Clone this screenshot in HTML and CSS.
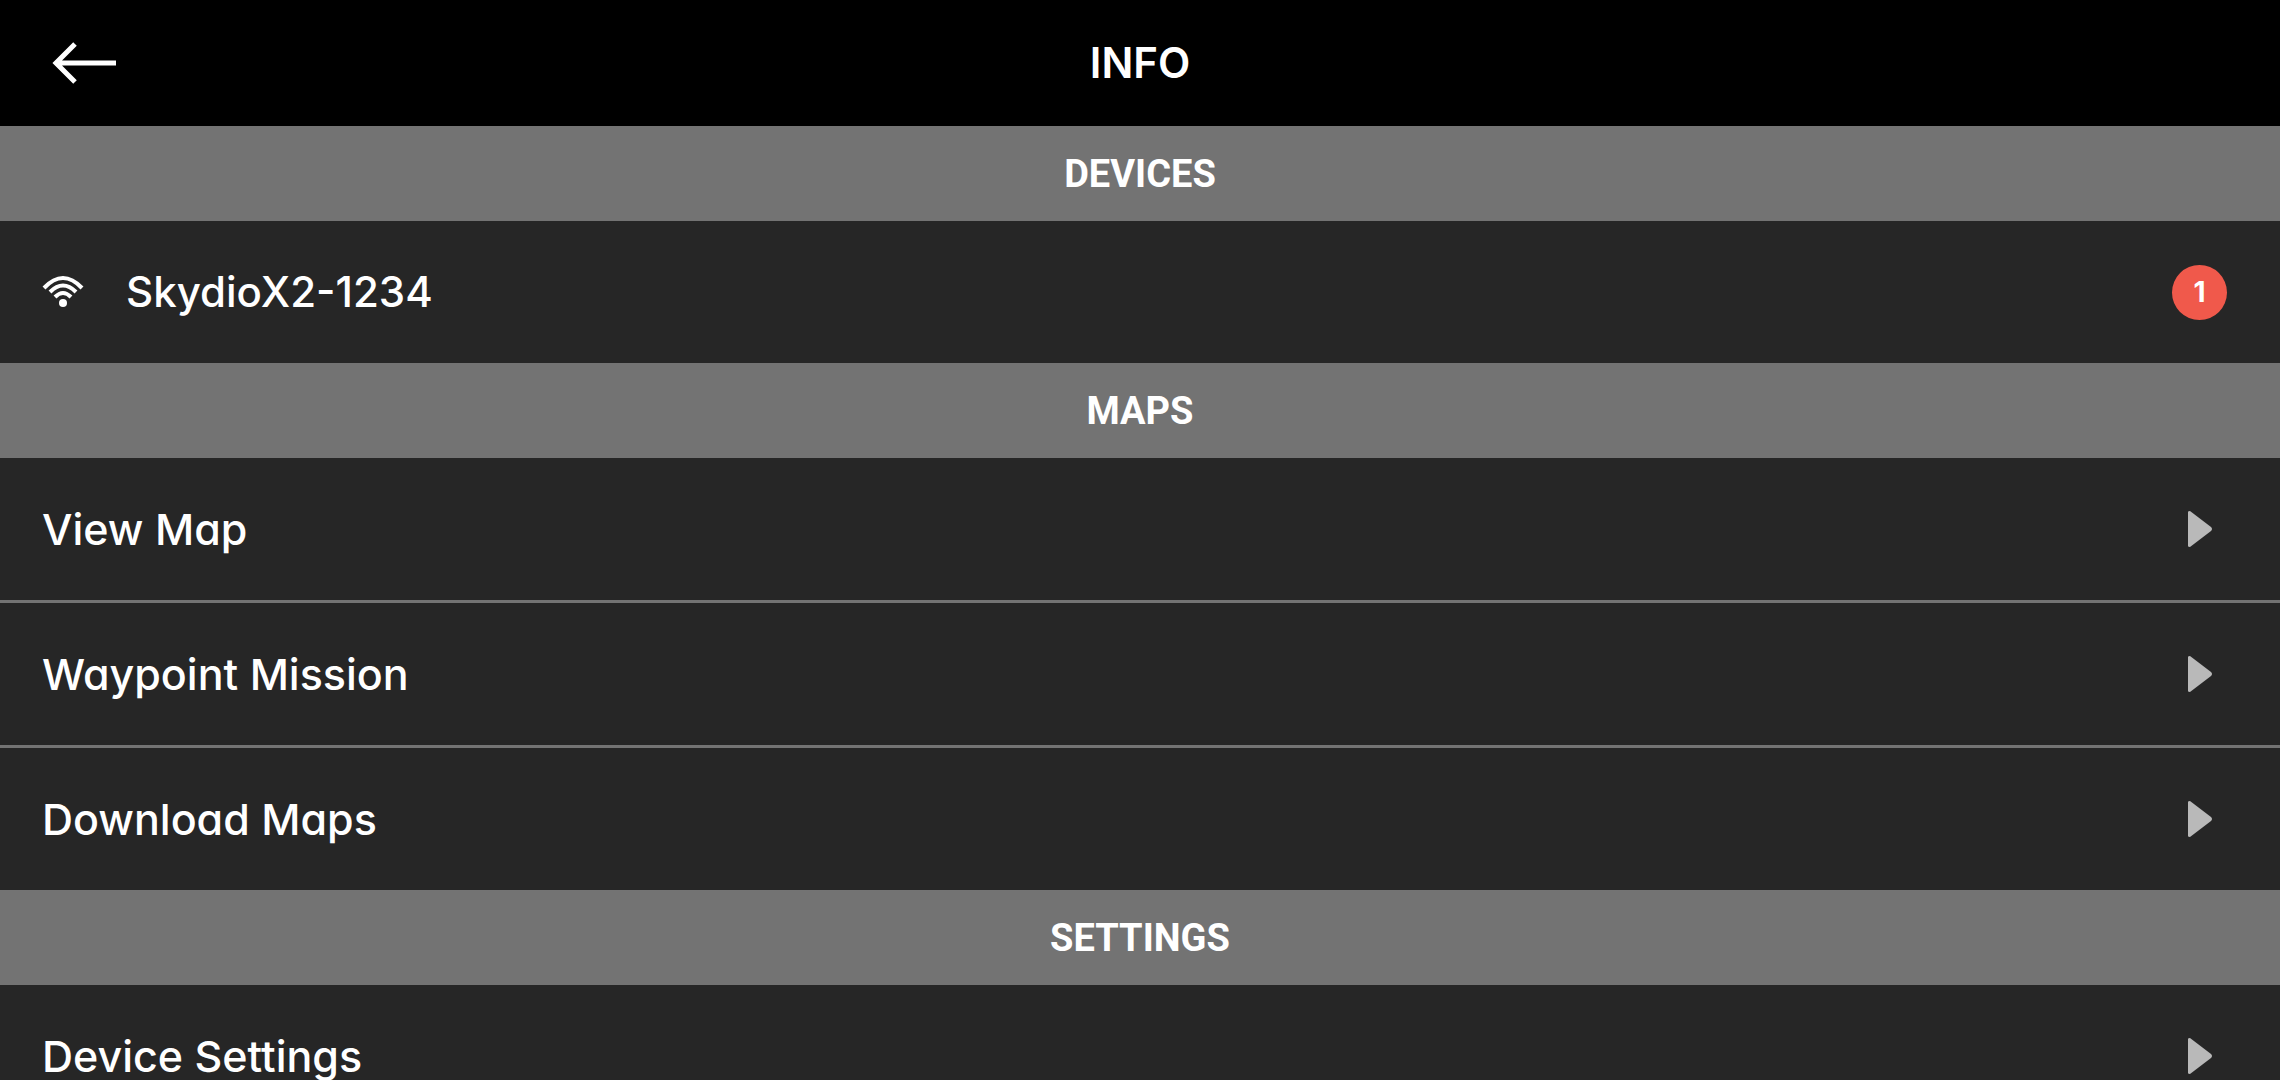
FILE: index.html
```html
<!DOCTYPE html>
<html lang="en">

<head>
  <meta charset="UTF-8">
  <meta name="viewport" content="width=device-width, initial-scale=1.0">
  <title>Info</title>

  <link rel="stylesheet" href="styles.css">
</head>

<body>

  <header class="topbar">
    <button class="back" type="button" aria-label="Back">
      <svg width="64" height="44" viewBox="0 0 64 44" fill="none" stroke="currentColor" stroke-width="5">
        <path d="M23 3 L4 22 L23 41 M4 22 H64" />
      </svg>
    </button>
    <h1>INFO</h1>
  </header>

  <main class="list">

    <section>
      <h2>DEVICES</h2>
      <a class="row" href="#device">
        <svg class="wifi" width="42" height="34" viewBox="0 0 42 34" fill="none" stroke="currentColor" stroke-width="4">
          <path d="M2 13 Q21 -7 40 13" />
          <path d="M8 17 Q21 4 34 17" />
          <path d="M13 22 Q21 14 29 22" />
          <circle cx="21" cy="28" r="4" fill="currentColor" stroke="none" />
        </svg>
        <span class="label device">SkydioX2-1234</span>
        <span class="end"><span class="badge">1</span></span>
      </a>
    </section>

    <section>
      <h2>MAPS</h2>
      <a class="row" href="#view-map">
        <span class="label">View Map</span>
        <span class="end"><svg class="caret" width="24" height="36" viewBox="0 0 24 36"><path d="M0 1 Q0 0 2 0 L23 16 Q25 18 23 20 L2 36 Q0 36 0 35 Z" /></svg></span>
      </a>
      <a class="row" href="#waypoint-mission">
        <span class="label">Waypoint Mission</span>
        <span class="end"><svg class="caret" width="24" height="36" viewBox="0 0 24 36"><path d="M0 1 Q0 0 2 0 L23 16 Q25 18 23 20 L2 36 Q0 36 0 35 Z" /></svg></span>
      </a>
      <a class="row" href="#download-maps">
        <span class="label">Download Maps</span>
        <span class="end"><svg class="caret" width="24" height="36" viewBox="0 0 24 36"><path d="M0 1 Q0 0 2 0 L23 16 Q25 18 23 20 L2 36 Q0 36 0 35 Z" /></svg></span>
      </a>
    </section>

    <section>
      <h2>SETTINGS</h2>
      <a class="row" href="#device-settings">
        <span class="label">Device Settings</span>
        <span class="end"><svg class="caret" width="24" height="36" viewBox="0 0 24 36"><path d="M0 1 Q0 0 2 0 L23 16 Q25 18 23 20 L2 36 Q0 36 0 35 Z" /></svg></span>
      </a>
    </section>

  </main>

</body>

</html>
```
FILE: styles.css
```css
* {
  box-sizing: border-box;
}

body {
  display: flex;
  flex-direction: column;
  height: 100vh;
  margin: 0;
  background: #262626;
  color: #fff;
  font-family: Inter, "Liberation Sans", sans-serif;
  font-feature-settings: "cv11"; /* single-storey a */
  font-size: 43px;
  font-weight: 500;
  line-height: 54px;
}

svg {
  display: block;
}

/* top bar: the two side columns keep the title centred */
.topbar {
  display: grid;
  grid-template-columns: 1fr auto 1fr;
  align-items: center;
  flex: none;
  padding: 36px 52px;
  background: #000;
}

.topbar h1 {
  margin: 0;
  font-size: 42px;
  font-weight: 600;
}

.back {
  justify-self: start;
  padding: 0;
  border: 0;
  background: transparent;
  color: inherit;
}

/* scrolling list under the bar */
.list {
  flex: 1;
  min-height: 0;
  overflow-y: auto;
  scrollbar-width: none;
}

.list h2 {
  margin: 0;
  padding: 24px 0 23px;
  background: #737373;
  font-family: Roboto, sans-serif;
  font-size: 38px;
  font-weight: 700;
  line-height: 48px;
  text-align: center;
}

.row {
  display: flex;
  align-items: center;
  gap: 42px;
  padding: 43px 53px 43px 42px;
  color: inherit;
  line-height: 56px;
  text-decoration: none;
}

.row + .row {
  border-top: 3px solid #737373;
}

.label {
  flex: 1;
}

.device {
  font-size: 42px;
}

.end {
  display: flex;
  justify-content: center;
  width: 55px;
}

.badge {
  width: 55px;
  border-radius: 50%;
  background: #f0594b;
  font-size: 28px;
  font-weight: 700;
  line-height: 55px;
  text-align: center;
}

.caret {
  fill: #b9b9b9;
}
```
